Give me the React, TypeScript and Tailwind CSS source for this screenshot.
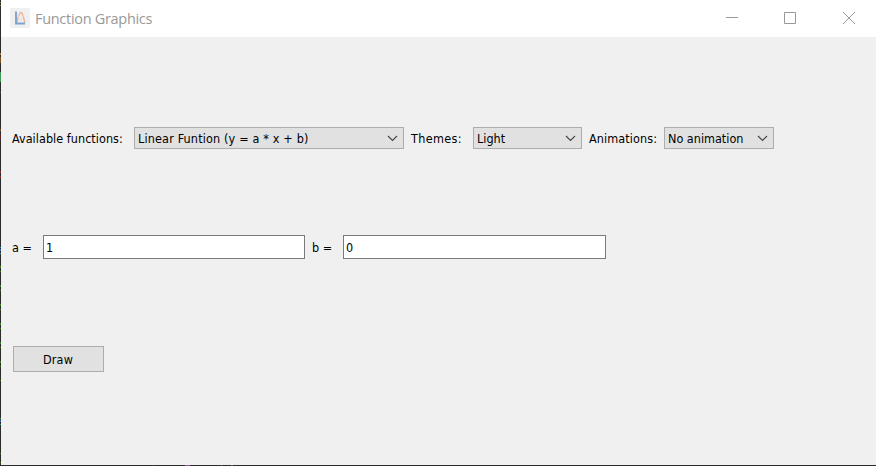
import React from "react";

const uiFont = "font-['DejaVu_Sans_Condensed','DejaVu_Sans',sans-serif] [font-stretch:condensed]";

function Chevron() {
  return (
    <svg width="11" height="7" viewBox="0 0 11 7" className="mt-px mr-[5px] shrink-0" fill="none" stroke="#444" strokeWidth="1.100">
      <path d="M1 1L5.500 5.500L10 1" />
    </svg>
  );
}

function Combo({ text, className, textClass }: { text: string; className: string; textClass: string }) {
  return (
    <button className={`flex h-[22px] items-center justify-between border border-[#adadad] bg-[#e1e1e1] pl-[3px] ${className}`}>
      <span className={`pt-[2px] ${textClass}`}>{text}</span>
      <Chevron />
    </button>
  );
}

const specks: [number, number, string][] = [
  [2, 1, "#4d7a2a"], [5, 1, "#a08030"], [53, 2, "#a87828"], [57, 6, "#795020"], [72, 10, "#3a9a50"],
  [92, 1, "#555530"], [129, 2, "#80502a"], [134, 6, "#55262b"], [171, 2, "#8a2c2c"], [176, 2, "#8a2c2c"],
  [247, 1, "#3a9090"], [249, 2, "#3568b8"], [253, 1, "#3a9090"], [266, 2, "#3a7d1c"], [271, 1, "#3a7d1c"],
  [285, 2, "#3a7d1c"], [290, 1, "#3a7d1c"], [304, 2, "#3a7d1c"], [309, 1, "#3a7d1c"], [323, 2, "#3a7d1c"],
  [328, 1, "#3a7d1c"], [342, 2, "#3a7d1c"], [347, 1, "#3a7d1c"], [361, 2, "#3a7d1c"], [366, 1, "#3a7d1c"],
  [380, 1, "#3a7d1c"], [418, 1, "#3a9050"], [420, 2, "#3568b8"], [424, 1, "#3a9090"], [453, 1, "#3a7d1c"], [462, 1, "#3a7d1c"],
];

export default function App() {
  return (
    <div className="flex h-[466px] w-[876px] overflow-hidden bg-[#2b2b2b]">
      <svg width="1" height="466" className="shrink-0" shapeRendering="crispEdges">
        {specks.map(([y, h, c]) => (
          <rect key={y} x="0" y={y} width="1" height={h} fill={c} />
        ))}
      </svg>
      <div className="flex w-[875px] flex-col">
        <header className="flex h-[37px] shrink-0 items-start bg-white">
          <svg width="20" height="20" viewBox="0 0 20 20" className="mt-2 ml-[9px] shrink-0" fill="none">
            <rect width="20" height="20" fill="#f0f0f0" />
            <path d="M7 14C8.500 8 9 4.500 11 4.500S13 9 15 14.500" stroke="#edb297" strokeWidth="1.500" />
            <path d="M8 6C8.500 10 9.500 12.500 10.500 12.500S12.500 9 14 7" stroke="#f4d6c7" strokeWidth="1" />
            <path d="M6 3.500V15.500H15" stroke="#7da2cc" strokeWidth="1.900" />
          </svg>
          <h1 className="mt-2 ml-[5px] font-['Open_Sans','Noto_Sans',sans-serif] text-[14.500px] leading-[21px] font-normal tracking-[-0.300px] whitespace-nowrap text-[#999]">
            Function Graphics
          </h1>
          <svg width="130" height="37" viewBox="0 0 130 37" className="ml-auto mr-[21px] shrink-0" fill="none" stroke="#999">
            <path d="M1 17.500H13" />
            <path d="M59.500 12.500H70.500V23.500H59.500Z" />
            <path d="M118 12L130 24M130 12L118 24" />
          </svg>
        </header>
        <main className={`flex h-[428px] shrink-0 flex-col bg-[#f0f0f0] text-[12.500px] leading-[20px] whitespace-nowrap text-black ${uiFont}`}>
          <div className="mt-[90px] flex h-[22px] items-center pl-[11px]">
            <label className="w-[122px] pt-[2px] tracking-[0.040px]">Available functions:</label>
            <Combo className="w-[270px]" textClass="tracking-[0.160px]" text="Linear Funtion (y = a * x + b)" />
            <label className="ml-[7px] w-[62px] pt-[2px] tracking-[0.350px]">Themes:</label>
            <Combo className="w-[109px]" textClass="" text="Light" />
            <label className="ml-[7px] w-[75px] pt-[2px] tracking-[0.100px]">Animations:</label>
            <Combo className="w-[110px]" textClass="" text="No animation" />
          </div>
          <div className="mt-[86px] flex h-[24px] items-center pl-[11px]">
            <label className="w-[31px] pt-[2px]">a =</label>
            <input defaultValue="1" className="h-[24px] w-[262px] border border-[#7a7a7a] bg-white px-[2px] outline-none" />
            <label className="ml-[7px] w-[31px] pt-[2px]">b =</label>
            <input defaultValue="0" className="h-[24px] w-[263px] border border-[#7a7a7a] bg-white px-[2px] outline-none" />
          </div>
          <button className="mt-[87px] ml-[12px] h-[26px] w-[91px] border border-[#adadad] bg-[#e1e1e1] pt-[2px] pr-px tracking-[0.200px]">Draw</button>
        </main>
        <svg width="875" height="1" className="shrink-0" shapeRendering="crispEdges">
          <rect x="152" width="1" height="1" fill="#4a5a38" />
          <rect x="184" width="5" height="1" fill="#9b4f93" />
          <rect x="220" width="1" height="1" fill="#666" />
          <rect x="230" width="2" height="1" fill="#4a6a38" />
        </svg>
      </div>
    </div>
  );
}
